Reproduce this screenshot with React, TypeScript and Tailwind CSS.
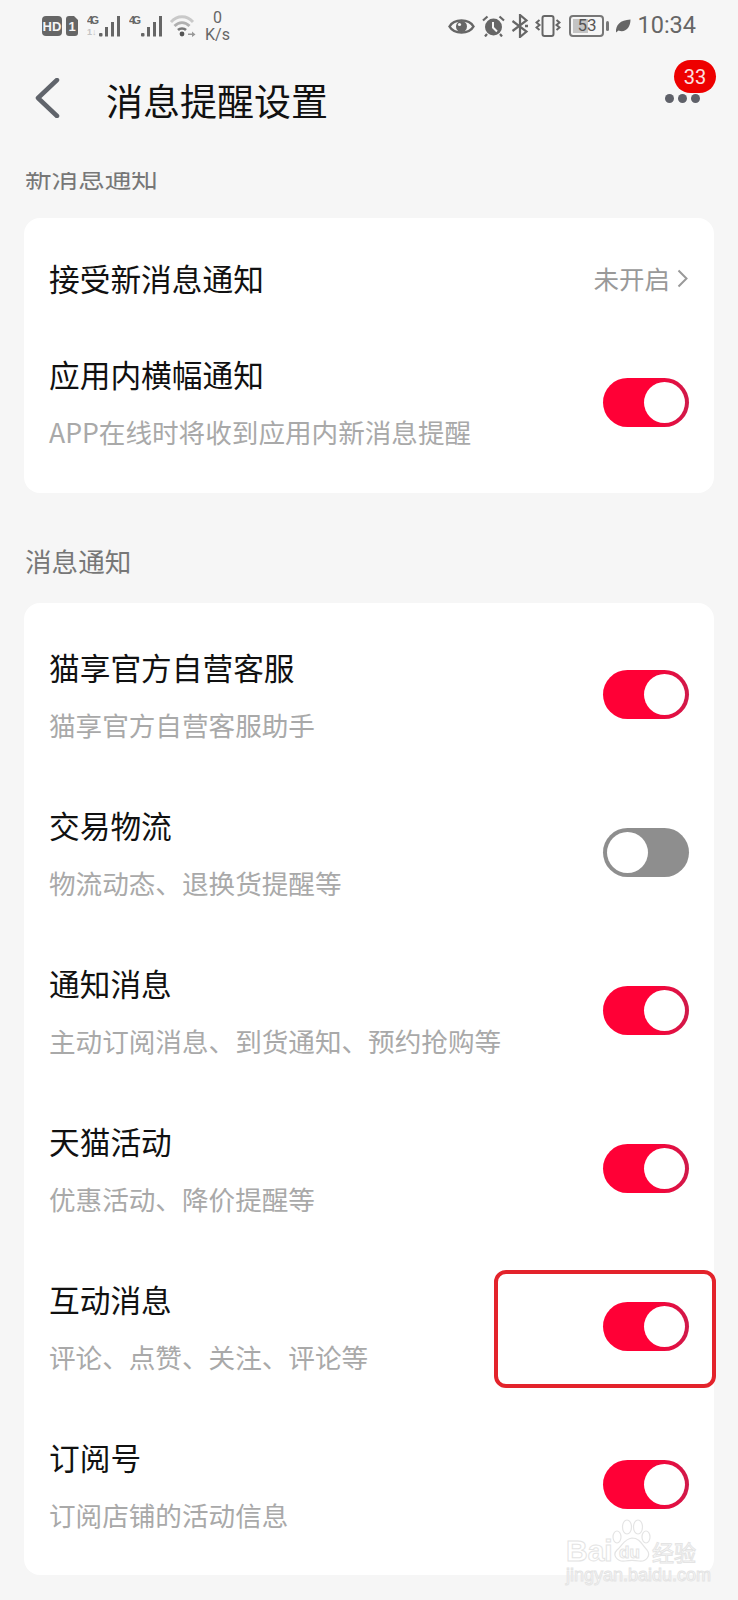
const cjk = { fontFamily: '"Noto Sans CJK SC", "Noto Sans", sans-serif' }

function Toggle({ on = true }: { on?: boolean }) {
  return (
    <div
      className={`flex h-[49px] w-[86px] shrink-0 items-center rounded-full px-1 ${
        on ? 'justify-end bg-[linear-gradient(90deg,#ff0036_55%,#cf1a4a)]' : 'justify-start bg-[#8e8e8e]'
      }`}
    >
      <div className="h-[41px] w-[41px] rounded-full bg-white" />
    </div>
  )
}

function Text2({ title, sub }: { title: string; sub: string }) {
  return (
    <div>
      <div className="whitespace-nowrap text-[30.7px] leading-[40px] text-[#111]">{title}</div>
      <div className="mt-[20px] whitespace-nowrap text-[26.6px] leading-[36px] text-[#a9a9a9]">{sub}</div>
    </div>
  )
}

function Row({ title, sub, on }: { title: string; sub: string; on?: boolean }) {
  return (
    <div className="flex h-[158px] items-center justify-between pl-[25px] pr-[25px]">
      <Text2 title={title} sub={sub} />
      <Toggle on={on} />
    </div>
  )
}

function Signal({ roaming }: { roaming?: boolean }) {
  return (
    <svg width="34" height="22" viewBox="0 0 34 22" fill="#666">
      <text x="0" y="9" fontSize="11" fontWeight="700" fontFamily="Liberation Sans" textLength="12">4G</text>
      {roaming && (
        <text x="0" y="20" fontSize="9" fontWeight="700" fill="#c4c4c4" fontFamily="Liberation Sans">1↓</text>
      )}
      <rect x="12" y="18" width="3.5" height="3.5" rx="1" />
      <rect x="18" y="12" width="3" height="9.5" />
      <rect x="24" y="7" width="3" height="14.5" />
      <rect x="30" y="1" width="3" height="20.5" />
    </svg>
  )
}

function StatusLeft() {
  return (
    <div className="flex items-center">
      <svg width="36" height="20" viewBox="0 0 36 20">
        <rect x="0" y="0" width="20" height="20" rx="4" fill="#666" />
        <path d="M24 3a3 3 0 0 1 3-3h5l4 4v13a3 3 0 0 1-3 3h-6a3 3 0 0 1-3-3z" fill="#666" />
        <text x="10" y="15" textAnchor="middle" fontSize="13" fontWeight="700" fill="#f6f6f6" fontFamily="Liberation Sans">HD</text>
        <text x="30" y="15" textAnchor="middle" fontSize="13" fontWeight="700" fill="#f6f6f6" fontFamily="Liberation Sans">1</text>
      </svg>
      <div className="ml-[9px] flex gap-[8px]">
        <Signal roaming />
        <Signal />
      </div>
      <svg className="ml-[7px]" width="26" height="22" viewBox="0 0 26 22" fill="none">
        <path d="M1 7C7 0 17 0 23 7" stroke="#c9c9c9" strokeWidth="2.8" />
        <path d="M4.5 11C9 6.5 15 6.5 19.5 11" stroke="#b0b0b0" strokeWidth="2.8" />
        <path d="M8 15C10 13 14 13 16 15" stroke="#777" strokeWidth="2.6" />
        <circle cx="12" cy="19" r="2.4" fill="#555" />
        <path d="M18 18.5h4v-2l3.5 3-3.5 2.500v-2h-4z" fill="#999" />
      </svg>
      <div className="ml-[10px] flex w-[23px] flex-col items-center text-[16px] leading-[17px] text-[#666]" style={{ fontFamily: 'Roboto' }}>
        <span>0</span>
        <span>K/s</span>
      </div>
    </div>
  )
}

function StatusRight() {
  return (
    <div className="flex items-center">
      <svg width="27" height="17" viewBox="0 0 27 17">
        <path d="M1.500 8.500C6 .5 21 .5 25.500 8.500 21 16.500 6 16.500 1.500 8.500Z" fill="none" stroke="#666" strokeWidth="2.5" />
        <circle cx="13.500" cy="8.500" r="5.500" fill="#666" />
        <circle cx="11.500" cy="6.500" r="1.600" fill="#f6f6f6" />
      </svg>
      <svg className="ml-[7px]" width="23" height="22" viewBox="0 0 23 22">
        <circle cx="11.500" cy="12" r="8.500" fill="#666" />
        <path d="M11 7v5.500l4 4" stroke="#f6f6f6" strokeWidth="2" fill="none" />
        <path d="M1 5.500L5.500 1.500M22 5.500L17.500 1.500M5 19l-2 2.500M18 19l2 2.500" stroke="#666" strokeWidth="2.200" />
      </svg>
      <svg className="ml-[6px]" width="18" height="24" viewBox="0 0 18 24" fill="none" stroke="#666" strokeWidth="2.200">
        <path d="M1.500 7l14 10.500L9 23V1l6.500 5.500L1.500 17" />
        <path d="M14 12h3" strokeWidth="2.500" />
      </svg>
      <svg className="ml-[6px]" width="26" height="22" viewBox="0 0 26 22" fill="none" stroke="#666" strokeWidth="2">
        <rect x="7.500" y="1" width="11" height="20" rx="2" />
        <path d="M4.500 5L1.500 7.500l3 2.500-3 2.500 3 2.500M21.500 5l3 2.500-3 2.500 3 2.500-3 2.500" />
      </svg>
      <div className="ml-[8px] flex items-center gap-[2px]">
        <div className="relative flex h-[22px] w-[35px] items-center justify-center rounded-[4px] border-2 border-[#777] text-[17px] text-[#555]" style={{ fontFamily: 'Roboto' }}>
          <div className="absolute inset-y-[2px] left-[2px] w-[15px] bg-[#c4c4c4]" />
          <span className="relative">53</span>
        </div>
        <div className="h-[10px] w-[3px] rounded-full bg-[#777]" />
      </div>
      <svg className="ml-[6px]" width="16" height="14" viewBox="0 0 16 14">
        <path d="M1 13.500C.5 6 5 1 15.500.5 15.500 9 10 14 3.500 11.500L1 13.500Z" fill="#666" />
      </svg>
      <span className="ml-[6px] text-[23.5px] leading-none text-[#666]" style={{ fontFamily: 'Roboto' }}>10:34</span>
    </div>
  )
}

function Watermark() {
  return (
    <div className="absolute left-[566px] top-[1518px] h-[66px] w-[134px] text-white [-webkit-text-stroke:1px_#e4e4e4]">
      <span className="absolute left-0 top-[18px] text-[30px] font-bold leading-[30px]" style={{ fontFamily: 'Liberation Sans' }}>Bai</span>
      <svg className="absolute left-[46px] top-0" width="40" height="46" viewBox="0 0 40 46" fill="none" stroke="#e4e4e4" strokeWidth="1.200">
        <ellipse cx="5" cy="19" rx="4" ry="6" />
        <ellipse cx="15" cy="9" rx="4.500" ry="7" />
        <ellipse cx="26" cy="9" rx="4.500" ry="7" />
        <ellipse cx="34" cy="19" rx="4" ry="6" />
        <path d="M20 20C12 21 10 28 5 32 0 37 5 44 13 43 18 42 22 42 27 43 35 44 39 37 35 32 30 27 28 20 20 20Z" />
      </svg>
      <span className="absolute left-[53px] top-[26px] text-[17px] font-bold leading-[18px]" style={{ fontFamily: 'Liberation Sans' }}>du</span>
      <span className="absolute left-[86px] top-[20px] text-[22px] leading-[26px]" style={cjk}>经验</span>
      <span className="absolute left-0 top-[47px] whitespace-nowrap text-[18px] leading-[20px]" style={{ fontFamily: 'Liberation Sans' }}>jingyan.baidu.com</span>
    </div>
  )
}

export default function App() {
  return (
    <div className="relative h-[1600px] w-[738px] overflow-hidden bg-[#f6f6f6]" style={cjk}>
      <div className="flex h-[50px] items-center justify-between pl-[42px] pr-[42px] pt-[2px]">
        <StatusLeft />
        <StatusRight />
      </div>

      {/* Header */}
      <div className="flex h-[122px] items-center pb-[22px] pl-[34px] pr-[38px]">
        <svg className="-mt-[4px]" width="26" height="40" viewBox="0 0 26 40" fill="none">
          <path d="M23 2L4 20l19 18" stroke="#60646b" strokeWidth="4.5" strokeLinecap="round" strokeLinejoin="round" />
        </svg>
        <h1 className="ml-[46px] text-[37px] font-normal leading-none text-[#111]">消息提醒设置</h1>
        <div className="relative ml-auto -mt-[3px] flex gap-[4px]">
          <span className="h-[9px] w-[9px] rounded-full bg-[#5f6169]" />
          <span className="h-[9px] w-[9px] rounded-full bg-[#5f6169]" />
          <span className="h-[9px] w-[9px] rounded-full bg-[#5f6169]" />
          <div className="absolute -right-[16px] -top-[34px] flex h-[33px] w-[42px] items-center justify-center rounded-full bg-[#ee0000] text-[20px] text-[#fbe0e0]" style={{ fontFamily: 'Roboto' }}>
            33
          </div>
        </div>
      </div>

      {/* clipped by the header, the list is scrolled */}
      <div className="flex h-[18px] items-end overflow-hidden pl-[25px]">
        <div className="text-[26.6px] leading-[26px] text-[#777]">新消息通知</div>
      </div>

      <div className="mx-[24px] mt-[28px] h-[275px] rounded-[16px] bg-white">
        <div className="flex h-[136px] items-center justify-between pb-[16px] pl-[25px] pr-[25px]">
          <div className="text-[30.7px] leading-[40px] text-[#111]">接受新消息通知</div>
          <div className="flex items-center text-[25.5px] text-[#999]">
            未开启
            <svg className="ml-[7px] mr-px" width="11" height="19" viewBox="0 0 11 19" fill="none">
              <path d="M1.500 1.500l8 8-8 8" stroke="#999" strokeWidth="2" />
            </svg>
          </div>
        </div>
        <div className="flex items-center justify-between pl-[25px] pr-[25px]">
          <Text2 title="应用内横幅通知" sub="APP在线时将收到应用内新消息提醒" />
          <Toggle />
        </div>
      </div>

      <div className="mt-[46px] pl-[25px] text-[26.6px] leading-[44px] text-[#777]">消息通知</div>

      <div className="mx-[24px] mt-[20px] h-[972px] rounded-[16px] bg-white pt-[12.5px]">
        <Row title="猫享官方自营客服" sub="猫享官方自营客服助手" />
        <Row title="交易物流" sub="物流动态、退换货提醒等" on={false} />
        <Row title="通知消息" sub="主动订阅消息、到货通知、预约抢购等" />
        <Row title="天猫活动" sub="优惠活动、降价提醒等" />
        <Row title="互动消息" sub="评论、点赞、关注、评论等" />
        <Row title="订阅号" sub="订阅店铺的活动信息" />
      </div>

      {/* annotation drawn on the screenshot */}
      <div className="absolute left-[494px] top-[1270px] h-[118px] w-[222px] rounded-[12px] border-[4px] border-[#e3232b]" />

      <Watermark />
    </div>
  )
}
